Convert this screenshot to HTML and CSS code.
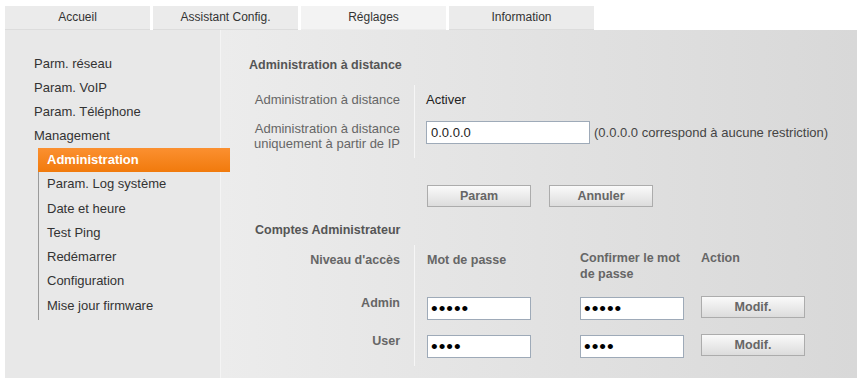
FILE: index.html
```html
<!DOCTYPE html>
<html lang="fr">
<head>
  <meta charset="UTF-8" />
  <title>Réglages - Administration</title>
  <link rel="stylesheet" href="styles.css">
</head>
<body>
  <div class="tabs">
    <div class="tab">Accueil</div>
    <div class="tab">Assistant Config.</div>
    <div class="tab active">Réglages</div>
    <div class="tab">Information</div>
  </div>

  <div class="page">
    <div class="sidebar">
      <div class="nav-item">Parm. réseau</div>
      <div class="nav-item">Param. VoIP</div>
      <div class="nav-item">Param. Téléphone</div>
      <div class="nav-item">Management</div>
      <div class="submenu">
        <div class="sub-item active">Administration</div>
        <div class="sub-item">Param. Log système</div>
        <div class="sub-item">Date et heure</div>
        <div class="sub-item">Test Ping</div>
        <div class="sub-item">Redémarrer</div>
        <div class="sub-item">Configuration</div>
        <div class="sub-item">Mise jour firmware</div>
      </div>
    </div>

    <div class="main">
      <h3 class="section-title">Administration à distance</h3>
      <div class="form-grid">
        <div class="label row1">Administration à distance</div>
        <div class="value row1">Activer</div>
        <div class="label row2">Administration à distance<br>uniquement à partir de IP</div>
        <div class="value row2">
          <input class="ip-input" type="text" value="0.0.0.0">
          <span class="hint">(0.0.0.0 correspond à aucune restriction)</span>
        </div>
      </div>
      <div class="actions">
        <button class="btn">Param</button>
        <button class="btn">Annuler</button>
      </div>

      <h3 class="section-title accounts">Comptes Administrateur</h3>
      <div class="accounts-grid">
        <div class="label head">Niveau d'accès</div>
        <div class="col head first">Mot de passe</div>
        <div class="col head">Confirmer le mot<br>de passe</div>
        <div class="col head">Action</div>

        <div class="label user">Admin</div>
        <div class="col cell first"><input class="pw-input" type="password" value="admin"></div>
        <div class="col cell"><input class="pw-input" type="password" value="admin"></div>
        <div class="col cell"><button class="btn">Modif.</button></div>

        <div class="label user">User</div>
        <div class="col cell first"><input class="pw-input" type="password" value="user"></div>
        <div class="col cell"><input class="pw-input" type="password" value="user"></div>
        <div class="col cell"><button class="btn">Modif.</button></div>
      </div>
    </div>
  </div>
</body>
</html>
```

FILE: styles.css
```css
body {
  margin: 0;
  font-family: 'Liberation Sans', Arial, sans-serif;
  background: #ffffff;
  color: #333;
  width: 859px;
}

.tabs {
  display: flex;
  gap: 3px;
  padding: 6px 0 0 5px;
}

.tab {
  width: 145px;
  height: 23px;
  line-height: 23px;
  text-align: center;
  font-size: 12px;
  color: #333;
  background: #ebebeb;
  border-bottom: 1px solid #dcdcdc;
}

.tab.active {
  background: #f3f3f3;
  border-bottom-color: #ececec;
}

.page {
  display: flex;
  margin-left: 5px;
  height: 348px;
}

.sidebar {
  width: 216px;
  background: #e8e8e8;
  border-right: 1px solid #f4f4f4;
  padding-top: 22px;
  box-sizing: border-box;
  font-size: 13px;
  color: #333;
}

.nav-item {
  line-height: 24px;
  padding-left: 29px;
}

.submenu {
  margin-left: 33px;
  border-left: 1px solid #9a9a9a;
  padding-bottom: 2px;
}

.sub-item {
  height: 24.3px;
  line-height: 24px;
  padding-left: 8px;
}

/* the selected entry runs over the edge of the sidebar */
.sub-item.active {
  position: relative;
  z-index: 1;
  width: 192px;
  margin-left: -1px;
  padding-left: 9px;
  box-sizing: border-box;
  background: linear-gradient(#fb9030, #f17a0c);
  color: #fff;
  font-weight: bold;
}

.main {
  flex: 1;
  margin-right: 2px;
  background: linear-gradient(to right, #ececec, #d8d8d8);
  padding: 27px 0 0 28px;
  box-sizing: border-box;
  font-size: 13px;
}

.section-title {
  margin: 0 0 12px;
  font-size: 12.5px;
  line-height: 16px;
  color: #555;
}

.section-title.accounts {
  margin: 15px 0 7px 6px;
}

.form-grid {
  display: grid;
  grid-template-columns: 166px 1fr;
}

.label {
  text-align: right;
  padding-right: 14px;
  border-right: 1px solid #f6f6f6;
  color: #666;
  line-height: 15px;
}

.value {
  padding-left: 11px;
  color: #222;
  line-height: 15px;
}

.row1 {
  height: 28px;
  padding-top: 7px;
  box-sizing: border-box;
}

.row2 {
  height: 45px;
  padding-top: 8px;
  box-sizing: border-box;
}

.value.row2 {
  display: flex;
  align-items: flex-start;
  padding-top: 8px;
}

.ip-input {
  width: 164px;
  height: 23px;
  box-sizing: border-box;
  margin: 0;
  padding: 0 4px;
  border: 1px solid #9eaab8;
  background: #fff;
  font-family: inherit;
  font-size: 13px;
  color: #222;
}

.hint {
  margin-left: 4px;
  line-height: 23px;
  color: #444;
}

.actions {
  display: flex;
  gap: 18px;
  padding: 27px 0 0 178px;
}

.btn {
  width: 104px;
  height: 22px;
  margin: 0;
  padding: 0;
  border: 1px solid #acacac;
  background: linear-gradient(#fafafa, #dcdcdc);
  font-family: inherit;
  font-size: 12.5px;
  font-weight: bold;
  color: #666;
}

.accounts-grid {
  display: grid;
  grid-template-columns: 166px 165px 121px 1fr;
}

.accounts-grid .col.first {
  padding-left: 12px;
}

.head {
  height: 45px;
  padding-top: 5px;
  box-sizing: border-box;
  font-size: 12.5px;
  font-weight: bold;
  line-height: 16px;
  color: #666;
}

.label.head,
.col.head.first {
  padding-top: 7px;
}

.label.user {
  height: 38px;
  padding-top: 5px;
  box-sizing: border-box;
  font-weight: bold;
  font-size: 12.5px;
  line-height: 16px;
}

.cell {
  height: 38px;
  padding-top: 7px;
  box-sizing: border-box;
}

.cell .btn {
  margin-top: -1px;
}

.pw-input {
  width: 104px;
  height: 23px;
  box-sizing: border-box;
  margin: 0;
  padding: 0 3px;
  border: 1px solid #9eaab8;
  background: #fff;
  font-family: inherit;
  font-size: 19px;
  letter-spacing: 1px;
  color: #000;
}
```
